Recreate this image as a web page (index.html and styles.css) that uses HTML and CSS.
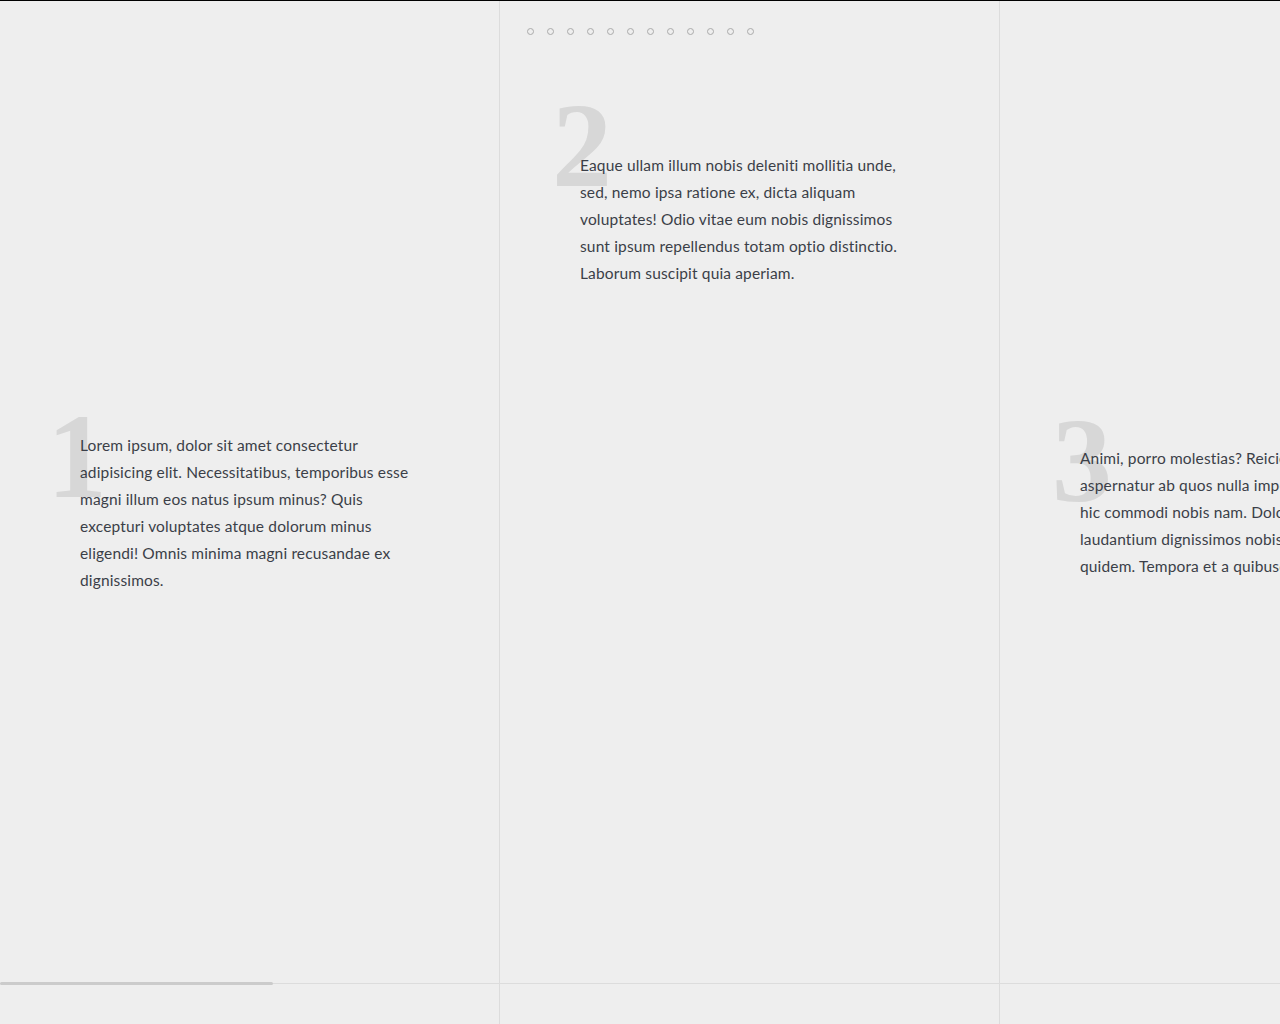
FILE: index.html
```html
<!DOCTYPE html>
<html lang="en">
<head>
<meta charset="utf-8">
<title>Horizontal story</title>
<link rel="stylesheet" href="styles.css">
</head>
<body>
<div class="topline"></div>
<nav class="dots">
  <span class="dot"></span><span class="dot"></span><span class="dot"></span><span class="dot"></span>
  <span class="dot"></span><span class="dot"></span><span class="dot"></span><span class="dot"></span>
  <span class="dot"></span><span class="dot"></span><span class="dot"></span><span class="dot"></span>
</nav>
<main class="track">
  <section class="panel">
    <article class="item item-1">
      <span class="num num-1">1</span>
      <p class="copy">Lorem ipsum, dolor sit amet consectetur adipisicing elit. Necessitatibus, temporibus esse magni illum eos natus ipsum minus? Quis excepturi voluptates atque dolorum minus eligendi! Omnis minima magni recusandae ex dignissimos.</p>
    </article>
  </section>
  <section class="panel">
    <article class="item item-2">
      <span class="num num-2">2</span>
      <p class="copy">Eaque ullam illum nobis deleniti mollitia unde, sed, nemo ipsa ratione ex, dicta aliquam voluptates! Odio vitae eum nobis dignissimos sunt ipsum repellendus totam optio distinctio. Laborum suscipit quia aperiam.</p>
    </article>
  </section>
  <section class="panel">
    <article class="item item-3">
      <span class="num num-3">3</span>
      <p class="copy">Animi, porro molestias? Reiciendis corporis aspernatur ab quos nulla impedit sequi, veniam hic commodi nobis nam. Doloremque repellat laudantium dignissimos nobis eligendi totam quidem. Tempora et a quibusdam.</p>
    </article>
  </section>
</main>
<div class="progress"><div class="progress-bar"></div></div>
</body>
</html>
```
FILE: styles.css
```css
html, body {
  margin: 0;
  padding: 0;
  height: 100%;
  overflow: hidden;
  background: #eeeeee;
}

body {
  font-family: Lato, "Liberation Sans", sans-serif;
  color: #3b3f48;
  position: relative;
}

.topline {
  position: absolute;
  top: 0;
  left: 0;
  right: 0;
  height: 1px;
  background: #000;
  z-index: 5;
}

.dots {
  position: absolute;
  top: 28px;
  left: 527px;
  display: flex;
  gap: 13px;
  z-index: 4;
}

.dot {
  width: 5px;
  height: 5px;
  border: 1px solid #aaaaaa;
  border-radius: 50%;
}

.track {
  display: flex;
  height: 1024px;
  width: 1500px;
}

.panel {
  flex: 0 0 500px;
  box-sizing: border-box;
  height: 100%;
  border-right: 1px solid #dcdcdc;
  padding-left: 80px;
}

.item {
  position: relative;
  width: 338px;
}

.item-1 { margin-top: 432px; }
.item-2 { margin-top: 152px; }
.item-3 { margin-top: 445px; }

.num {
  position: absolute;
  font-family: "Liberation Serif", "DejaVu Serif", serif;
  font-weight: bold;
  font-size: 120px;
  line-height: 1;
  color: #d7d7d7;
  z-index: 0;
}

.num-1 { top: -35px; left: -33px; }
.num-2 { top: -66px; left: -28px; }
.num-3 { top: -44px; left: -28px; }

.copy {
  position: relative;
  z-index: 1;
  margin: 0;
  font-size: 15.5px;
  letter-spacing: 0.15px;
  line-height: 27px;
}

.progress {
  position: absolute;
  left: 0;
  right: 0;
  top: 983px;
  height: 1px;
  background: #dcdcdc;
  z-index: 3;
}

.progress-bar {
  position: absolute;
  left: 0;
  top: -1px;
  width: 273px;
  height: 3px;
  border-radius: 2px;
  background: #cbcbcb;
}
```
